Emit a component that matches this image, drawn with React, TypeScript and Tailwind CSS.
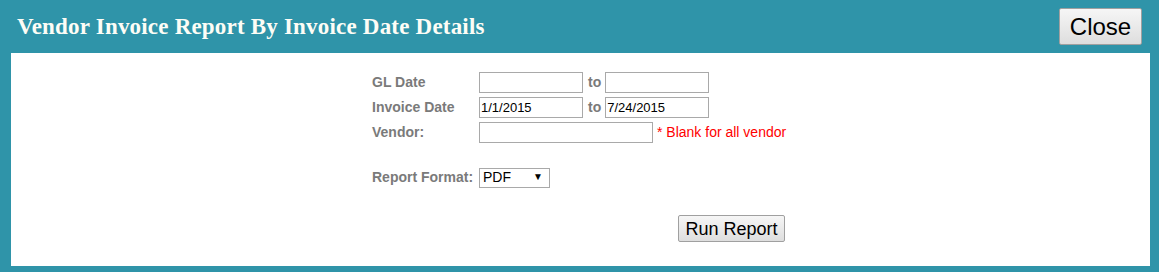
export default function App() {
  const label = "text-[14px] font-bold text-[#7a7a7a]";
  const input =
    "h-[21px] border border-[#a9a9a9] bg-white px-[1px] text-[13px] text-black outline-none";

  return (
    <div className="w-[1159px] h-[272px] bg-[#2f94a9] flex flex-col font-['Liberation_Sans',Arial,sans-serif]">
      <header className="h-[53px] flex items-center justify-between pl-[17px] pr-[17px]">
        <h1 className="font-['Liberation_Serif',serif] text-[23px] tracking-[0.2px] font-bold text-[#fdfdf6] pt-[1px]">
          Vendor Invoice Report By Invoice Date Details
        </h1>
        <button className="h-[37px] w-[83px] border border-[#a0a0a0] rounded-[2px] bg-gradient-to-b from-[#f6f6f6] to-[#dedede] text-[24px] text-black">
          Close
        </button>
      </header>

      <main className="flex-1 ml-[11px] mr-[9px] mb-[6px] bg-white pt-[19px] pl-[361px]">
        <div className="grid grid-cols-[107px_auto] gap-y-[4px] items-center">
          <span className={label}>GL Date</span>
          <div className="flex items-center">
            <input className={`${input} w-[104px]`} />
            <span className={`${label} ml-[5px] mr-[4px]`}>to</span>
            <input className={`${input} w-[104px]`} />
          </div>

          <span className={label}>Invoice Date</span>
          <div className="flex items-center">
            <input className={`${input} w-[104px]`} defaultValue="1/1/2015" />
            <span className={`${label} ml-[5px] mr-[4px]`}>to</span>
            <input className={`${input} w-[104px]`} defaultValue="7/24/2015" />
          </div>

          <span className={label}>Vendor:</span>
          <div className="flex items-center">
            <input className={`${input} w-[174px]`} />
            <span className="ml-[4px] text-[14px] text-[#f00]">* Blank for all vendor</span>
          </div>
        </div>

        <div className="mt-[24px] flex items-center">
          <span className={`${label} w-[107px]`}>Report Format:</span>
          <div className="relative h-[20px] w-[71px] border border-[#a9a9a9] flex items-center pl-[3px] text-[14px] text-black">
            PDF
            <span className="absolute right-[6px] top-[0px] text-[10px]">▼</span>
          </div>
        </div>

        <div className="mt-[27px] pl-[306px]">
          <button className="h-[27px] w-[107px] border border-[#a0a0a0] rounded-[2px] bg-gradient-to-b from-[#f6f6f6] to-[#dedede] text-[18px] text-black">
            Run Report
          </button>
        </div>
      </main>
    </div>
  );
}
